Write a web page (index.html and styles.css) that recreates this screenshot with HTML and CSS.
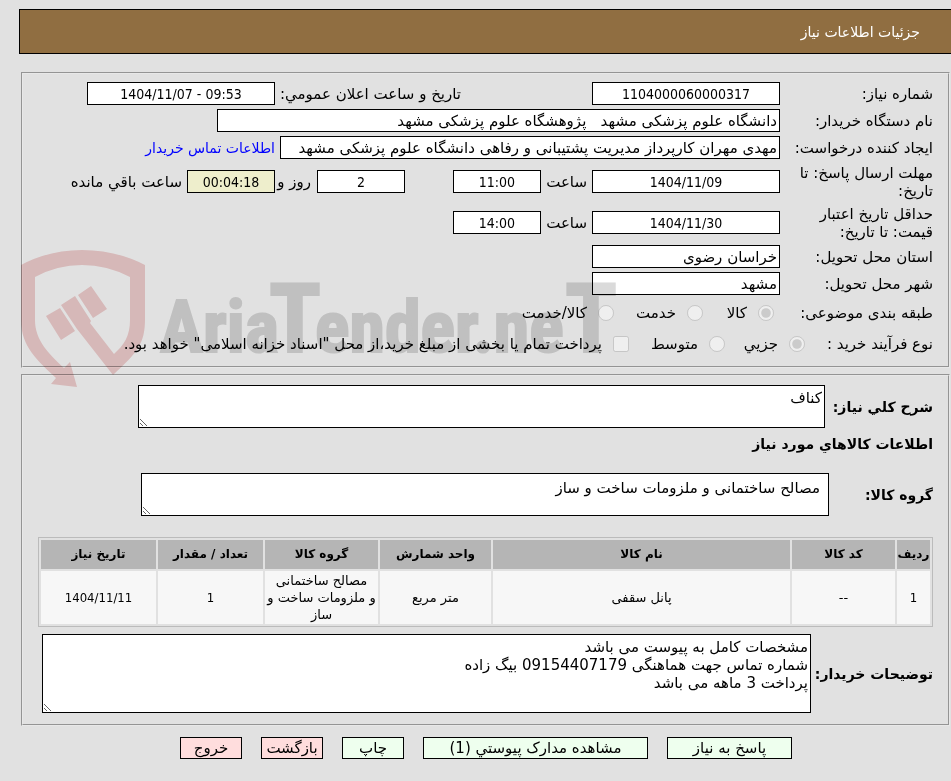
FILE: index.html
```html
<!DOCTYPE html>
<html lang="fa" dir="rtl">

<head>
  <meta charset="UTF-8">
  <title>جزئیات اطلاعات نیاز</title>
  <link rel="stylesheet" href="styles.css">
</head>

<body>
  <header class="page-title">جزئیات اطلاعات نیاز</header>

  <main>
    <fieldset class="panel info">
      <div class="row">
        <label class="name" for="needNo">شماره نیاز:</label>
        <input id="needNo" class="box wide" dir="ltr" value="1104000060000317" readonly>
        <label class="date-label" for="announce">تاریخ و ساعت اعلان عمومي:</label>
        <input id="announce" class="box wide" dir="ltr" value="1404/11/07 - 09:53" readonly>
      </div>
      <div class="row">
        <label class="name" for="buyer">نام دستگاه خریدار:</label>
        <input id="buyer" class="box buyer" value="دانشگاه علوم پزشکی مشهد &nbsp; پژوهشگاه علوم پزشکی مشهد" readonly>
      </div>
      <div class="row">
        <label class="name" for="creator">ایجاد کننده درخواست:</label>
        <input id="creator" class="box creator" value="مهدی مهران کارپرداز مدیریت پشتیبانی و رفاهی دانشگاه علوم پزشکی مشهد" readonly>
        <a class="contact" href="#">اطلاعات تماس خریدار</a>
      </div>
      <div class="row tall">
        <label class="name" for="deadline">مهلت ارسال پاسخ: تا تاریخ:</label>
        <input id="deadline" class="box wide" dir="ltr" value="1404/11/09" readonly>
        <label class="hour-label" for="deadlineHour">ساعت</label>
        <input id="deadlineHour" class="box small" dir="ltr" value="11:00" readonly>
        <input id="days" class="box small days" dir="ltr" value="2" readonly>
        <label class="day-label" for="days">روز و</label>
        <input id="timer" class="box small timer" dir="ltr" value="00:04:18" readonly>
        <label class="after" for="timer">ساعت باقي مانده</label>
      </div>
      <div class="row tall">
        <label class="name" for="valid">حداقل تاریخ اعتبار قیمت: تا تاریخ:</label>
        <input id="valid" class="box wide" dir="ltr" value="1404/11/30" readonly>
        <label class="hour-label" for="validHour">ساعت</label>
        <input id="validHour" class="box small" dir="ltr" value="14:00" readonly>
      </div>
      <div class="row">
        <label class="name" for="province">استان محل تحویل:</label>
        <input id="province" class="box wide" value="خراسان رضوی" readonly>
      </div>
      <div class="row">
        <label class="name" for="city">شهر محل تحویل:</label>
        <input id="city" class="box wide" value="مشهد" readonly>
      </div>
      <div class="row options subject">
        <span class="name">طبقه بندی موضوعی:</span>
        <label><input type="radio" name="subject" checked disabled>کالا</label>
        <label><input type="radio" name="subject" disabled>خدمت</label>
        <label><input type="radio" name="subject" disabled>کالا/خدمت</label>
      </div>
      <div class="row options process">
        <span class="name">نوع فرآیند خرید :</span>
        <label><input type="radio" name="process" checked disabled>جزیي</label>
        <label><input type="radio" name="process" disabled>متوسط</label>
        <label><input type="checkbox" disabled>پرداخت تمام یا بخشی از مبلغ خرید،از محل "اسناد خزانه اسلامی" خواهد بود.</label>
      </div>
    </fieldset>

    <fieldset class="panel goods">
      <div class="area-row summary">
        <label for="summary">شرح کلي نیاز:</label>
        <textarea id="summary" readonly>کناف</textarea>
      </div>
      <h2>اطلاعات کالاهاي مورد نیاز</h2>
      <div class="area-row group">
        <label for="group">گروه کالا:</label>
        <textarea id="group" readonly>مصالح ساختمانی و ملزومات ساخت و ساز</textarea>
      </div>
      <table>
        <colgroup>
          <col class="c-row">
          <col class="c-code">
          <col class="c-name">
          <col class="c-unit">
          <col class="c-group">
          <col class="c-count">
          <col class="c-date">
        </colgroup>
        <thead>
          <tr>
            <th>ردیف</th>
            <th>کد کالا</th>
            <th>نام کالا</th>
            <th>واحد شمارش</th>
            <th>گروه کالا</th>
            <th>تعداد / مقدار</th>
            <th>تاریخ نیاز</th>
          </tr>
        </thead>
        <tbody>
          <tr>
            <td class="num">1</td>
            <td>--</td>
            <td>پانل سقفی</td>
            <td>متر مربع</td>
            <td>مصالح ساختمانی و&nbsp;ملزومات ساخت و ساز</td>
            <td class="num">1</td>
            <td class="num" dir="ltr">1404/11/11</td>
          </tr>
        </tbody>
      </table>
      <div class="area-row notes">
        <label for="notes">توضیحات خریدار:</label>
        <textarea id="notes" readonly>مشخصات کامل به پیوست می باشد
شماره تماس جهت هماهنگی 09154407179 بیگ زاده
پرداخت 3 ماهه می باشد</textarea>
      </div>
    </fieldset>

    <div class="actions">
      <button class="btn reply">پاسخ به نیاز</button>
      <button class="btn docs">مشاهده مدارک پیوستي (1)</button>
      <button class="btn">چاپ</button>
      <button class="btn red">بازگشت</button>
      <button class="btn red">خروج</button>
    </div>
  </main>

  <svg class="watermark" width="610" height="140" viewBox="0 0 610 140" direction="ltr">
    <g fill="#f3d1d1">
      <!-- shield -->
      <path d="M0 16Q28 1 61 1Q95 1 124 16V70C124 94 117 103 92 126L56 80L40 56L54 47L70 72L69 74L93 105C103 96 109 87 109 71V28Q86 16 61 16Q36 16 14 28V71C14 91 27 104 43 119L49 113L56 138L30 135L35 129C17 112 0 98 0 71Z" />
      <!-- gavel head -->
      <path d="M25 67L39 59L54 82L40 91ZM57 46L70 37L86 60L72 69Z" />
    </g>
    <text y="103" class="mark"><tspan x="139">Aria</tspan><tspan x="248" class="cap">T</tspan><tspan x="294">ender.ne</tspan><tspan x="544" class="cap">T</tspan></text>
  </svg>
</body>

</html>
```
FILE: styles.css
```css
body {
  margin: 0;
  padding-top: 9px;
  position: relative;
  background-color: #e1e1e1;
  color: #000;
  font-family: "DejaVu Sans", sans-serif;
  font-size: 15px;
  line-height: 18px;
}

input,
textarea,
button {
  font: inherit;
  color: #000;
  box-sizing: border-box;
}

.page-title {
  margin-left: 19px;
  padding: 13px 31px 12px;
  border: 1px solid #000;
  border-right: none;
  background-color: #906e41;
  color: #fff;
  font-size: 14px;
}

main {
  margin: 18px 1px 0 21px;
}

.panel {
  min-width: 0;
  margin: 0 0 6px;
  border: 2px groove #e8e8e8;
}

.info {
  padding: 6px 15px 7px;
}

.goods {
  padding: 9px 15px 11px;
}

.row {
  display: flex;
  align-items: center;
  height: 27px;
  white-space: nowrap;
}

.row.tall {
  height: 41px;
}

.name {
  flex: none;
  box-sizing: border-box;
  width: 153px;
  padding-left: 14px;
  white-space: normal;
}

.box {
  flex: none;
  height: 23px;
  padding: 0 2px;
  border: 1px solid #000;
  background-color: #fff;
}

.box[dir="ltr"],
.num {
  font-family: "DejaVu Sans Condensed", "DejaVu Sans", sans-serif;
  font-size: 14px;
  text-align: center;
}

.wide {
  width: 188px;
}

.small {
  width: 88px;
}

.buyer {
  width: 563px;
}

.creator {
  width: 500px;
}

.timer {
  background-color: #eeeecc;
}

.days {
  margin-right: 48px;
}

.date-label {
  width: 186px;
  margin-right: 131px;
}

.hour-label {
  width: 46px;
  padding-right: 5px;
}

.day-label {
  width: 36px;
  padding-right: 6px;
}

.after,
.contact {
  padding-right: 5px;
}

.contact {
  color: #00f;
  font-size: 14px;
  text-decoration: none;
}

.options {
  height: 31px;
}

.options label {
  display: flex;
  align-items: center;
  gap: 11px;
}

.options input {
  width: 16px;
  height: 16px;
  margin: 0;
}

.subject .name {
  width: 159px;
}

.subject label {
  width: 71px;
}

.subject label:nth-of-type(2) {
  width: 89px;
}

.process .name {
  width: 128px;
  padding-left: 0;
}

.process label {
  width: 80px;
}

.process label:nth-of-type(2) {
  width: 96px;
}

.process label:last-child,
.subject label:last-child {
  width: auto;
}

.area-row {
  display: flex;
  align-items: center;
}

.area-row label,
h2 {
  font-size: 14px;
  font-weight: bold;
}

.area-row label {
  flex: none;
}

textarea {
  flex: 1;
  height: 43px;
  padding: 3px 2px;
  border: 1px solid #000;
  background-color: #fff;
}

.summary {
  margin-left: 100px;
}

.summary label {
  width: 108px;
}

h2 {
  margin: 7px 0 20px;
}

.group {
  margin-left: 103px;
}

.group label {
  width: 104px;
}

.group textarea {
  padding: 5px 8px;
}

table {
  width: 100%;
  margin: 21px 0 7px;
  table-layout: fixed;
  border: 1px solid #bbb;
  border-spacing: 2px;
  font-size: 13px;
  line-height: 17px;
  text-align: center;
}

th {
  height: 29px;
  padding: 0;
  background-color: #b5b5b5;
  font-size: 12px;
}

td {
  height: 53px;
  padding: 0;
  background-color: #f7f7f7;
}

td.num {
  font-size: 13px;
}

.c-row {
  width: 33px;
}

.c-code {
  width: 103px;
}

.c-unit {
  width: 111px;
}

.c-group {
  width: 113px;
}

.c-count {
  width: 105px;
}

.c-date {
  width: 115px;
}

.notes {
  margin-left: 4px;
}

.notes label {
  width: 122px;
}

.notes textarea {
  height: 79px;
}

.actions {
  display: flex;
  gap: 19px;
  padding: 5px 158px 22px 0;
}

.btn {
  width: 62px;
  height: 22px;
  padding: 0;
  border: 1px solid #000;
  background-color: #eeffee;
}

.btn.reply {
  width: 125px;
}

.btn.docs {
  width: 225px;
}

.btn.red {
  background-color: #ffdddd;
}

.watermark {
  position: absolute;
  top: 249px;
  left: 21px;
  pointer-events: none;
  mix-blend-mode: multiply;
}

.mark {
  fill: #dadada;
  stroke: #dadada;
  stroke-width: 2px;
  font-family: "Liberation Sans Narrow", "Roboto Condensed", sans-serif;
  font-size: 72px;
  font-weight: bold;
}

.cap {
  font-size: 96px;
}
```
